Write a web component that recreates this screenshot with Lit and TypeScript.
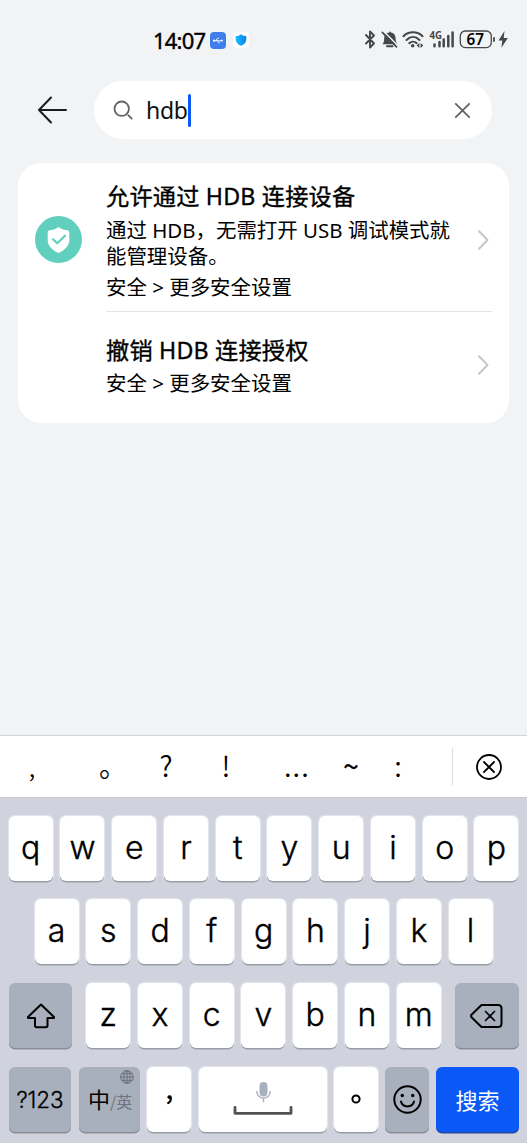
import { LitElement, html, css } from "lit";
import { customElement, property } from "lit/decorators.js";

@customElement("status-bar")
class StatusBar extends LitElement {
  static styles = css`
    :host { display: flex; height: 40px; padding: 20px 18px 0 153px; align-items: center; justify-content: space-between; box-sizing: content-box; }
    .side { display: flex; align-items: center; height: 40px; }
    .time { font: 400 22px/38px "Noto Sans", sans-serif; width: 57px; letter-spacing: -0.8px; color: #000; white-space: nowrap; -webkit-text-stroke: 0.400px #000; }
    svg { display: block; overflow: visible; }
    .usb { margin-right: 7px; }
    .mono { font: 700 10.5px "Noto Sans", sans-serif; fill: #464749; }
    .level { font: 600 16px "Noto Sans", sans-serif; fill: #000; }
  `;
  render() {
    return html`
      <div class="side">
        <span class="time">14:07</span>
        <svg class="usb" width="16" height="17" viewBox="0 0 16 17">
          <rect width="16" height="17" rx="4" fill="#3f7fec" />
          <g stroke="#fff" stroke-width="0.9" fill="none"><path d="M3.5 8.7H12M5.5 8.7L7.5 6.3H9M7 8.7L8.7 10.7H10" /></g>
          <circle cx="4" cy="8.7" r="1.1" fill="#fff" /><path d="M11.3 7.3L13.3 8.7L11.3 10Z" fill="#fff" />
        </svg>
        <svg width="16" height="16" viewBox="0 0 16 16">
          <defs><linearGradient id="sh"><stop offset="0" stop-color="#16c0fb" /><stop offset="1" stop-color="#0a80ee" /></linearGradient></defs>
          <rect width="16" height="16" rx="4" fill="#fff" />
          <path d="M8 2.2C9.5 3.5 11.3 4 13.3 4V7.5C13.3 10.5 11 12.6 8 13.8C5 12.6 2.7 10.5 2.7 7.5V4C4.700 4 6.500 3.500 8 2.200Z" fill="url(#sh)" />
        </svg>
      </div>
      <svg width="145" height="40" viewBox="364 20 145 40" fill="none" stroke="#464749">
        <path d="M366 35L374 43.500L370 47.500V31.500L374 35.500L366 43.500" stroke-width="1.900" stroke-linejoin="round" stroke-linecap="round" />
        <path d="M382.500 44.300C384.500 42 384 40 384.200 37.500C384.600 34.300 386.500 32.900 389.200 32.600C389.200 31 390.800 31 390.800 32.600C393.500 32.900 395.400 34.800 395.600 38C395.600 40.500 396 42.300 397.500 44.300Z" fill="#464749" stroke="none" />
        <path d="M387 46.300H392.500" stroke-width="2" stroke-linecap="round" />
        <path d="M383.500 31.200L398 45.700" stroke="#f1f3f5" stroke-width="1.600" />
        <path d="M382.300 32.400L396.500 46.800" stroke-width="1.700" stroke-linecap="round" />
        <g stroke-width="2.100" stroke-linecap="round">
          <path d="M403.500 36.200C408.500 31 417.500 31 422.500 36.200M406.500 39.900C410.500 36 415.500 36 419.500 39.900M409.400 43.100C411.500 41.200 414.500 41.200 416.600 43.100" />
        </g>
        <circle cx="412.700" cy="45.700" r="1.800" fill="#464749" stroke="none" />
        <path d="M416.700 45.400L419.400 42.900V47.900ZM423.300 45.400L420.600 42.900V47.900Z" fill="#464749" stroke="none" />
        <text class="mono" x="429.500" y="38.800" textLength="12.500" lengthAdjust="spacingAndGlyphs" stroke="none">4G</text>
        <path d="M434.500 44.500V46.300M439.500 42V46.300M443.700 39.500V46.300M448.300 36V46.300M452.600 32.500V46.300" stroke-width="2.500" stroke-linecap="round" />
        <rect x="460.300" y="31" width="31" height="16.600" rx="5" stroke-width="1.300" />
        <text class="level" x="466.500" y="45.200" textLength="17.500" lengthAdjust="spacingAndGlyphs" stroke="none">67</text>
        <path d="M494 37.800V41" stroke-width="1.800" stroke-linecap="round" />
        <path d="M504.500 31L498.500 40.500H502.300L501.400 47.800L507.800 38H503.700Z" fill="#464749" stroke="none" />
      </svg>
    `;
  }
}

@customElement("search-header")
class SearchHeader extends LitElement {
  static styles = css`
    :host { display: flex; align-items: center; padding: 21px 35px 0 37px; }
    svg { display: block; flex: none; }
    .field { display: flex; flex: 1; align-items: center; height: 58px; margin-left: 27px; padding: 0 20px 0 19px; border-radius: 29px; background: #fff; }
    .query { flex: 1; display: flex; align-items: center; margin-left: 13px; font: 400 23px/32px "Noto Sans", sans-serif; color: #111; }
    .text { letter-spacing: -0.3px; }
    .caret { width: 3px; height: 33px; border-radius: 1.500px; background: #0a59f7; }
  `;
  render() {
    return html`
      <svg width="30" height="28" viewBox="0 0 30 28" fill="none" stroke="#1b1c1e" stroke-width="2" stroke-linecap="round" stroke-linejoin="round">
        <path d="M2 14H29M14 1.500L2 14L14 26.500" />
      </svg>
      <div class="field">
        <svg width="20" height="20" viewBox="0 0 20 20" fill="none" stroke="#636466" stroke-width="1.800" stroke-linecap="round">
          <circle cx="8.700" cy="8.700" r="7.200" /><path d="M15.200 15.200L18.700 18.700" />
        </svg>
        <div class="query"><span class="text">hdb</span><span class="caret"></span></div>
        <svg width="19" height="19" viewBox="0 0 19 19" fill="none" stroke="#636466" stroke-width="1.800" stroke-linecap="round"><path d="M2.800 2.800L16.200 16.200M16.200 2.800L2.800 16.200" /></svg>
      </div>
    `;
  }
}

@customElement("result-list")
class ResultList extends LitElement {
  static styles = css`
    :host { display: block; margin: 24px 18px 0 17.500px; height: 260px; border-radius: 23px; background: #fff; color: #000; font-family: "Noto Sans", "Noto Sans CJK SC", sans-serif; }
    .row { display: grid; grid-template-columns: 71px 1fr 14px; padding: 0 19px 0 17.500px; align-items: center; }
    .first { height: 149px; }
    .second { height: 111px; }
    .body { align-self: stretch; box-sizing: border-box; white-space: nowrap; }
    .first .body { padding-top: 17px; }
    .second .body { padding-top: 22px; }
    .title { font-size: 23.200px; line-height: 33px; height: 33px; letter-spacing: 0.200px; -webkit-text-stroke: 0.350px #000; }
    .desc { font-size: 20.450px; line-height: 26px; margin-top: 4px; height: 52px; }
    .path { font-size: 20.450px; line-height: 29px; margin-top: 4px; height: 29px; }
    .second .path { margin-top: 2px; }
    .line { height: 1px; margin: -1px 17.500px 0 88.500px; background: #e3e4e6; }
    .pad { padding-top: 4px; }
    .up { margin-top: -5px; }
    svg { display: block; }
  `;
  private chevron() {
    return html`<svg width="14" height="20" viewBox="0 0 14 20" fill="none" stroke="#c6c7c9" stroke-width="2" stroke-linecap="round" stroke-linejoin="round"><path d="M3 1.300L11.500 10L3 18.700" /></svg>`;
  }
  render() {
    return html`
      <div class="row first">
        <svg class="pad" width="47" height="47" viewBox="0 0 47 47">
          <circle cx="23.500" cy="23.500" r="23.500" fill="#61cfbe" />
          <path d="M23.500 11C26.500 13.300 30 14 32.500 14.300Q34.300 14.500 34.300 16.500V24C34.300 30 29.500 34.500 23.500 37C17.500 34.500 12.700 30 12.700 24V16.500Q12.700 14.500 14.500 14.300C17 14 20.500 13.300 23.500 11Z" fill="#fff" />
          <path d="M18 23.200L22.300 27.300L30 19.700" fill="none" stroke="#61cfbe" stroke-width="2.200" stroke-linecap="round" stroke-linejoin="round" />
        </svg>
        <div class="body">
          <div class="title">允许通过 HDB 连接设备</div>
          <div class="desc">通过 HDB，无需打开 USB 调试模式就<br />能管理设备。</div>
          <div class="path">安全 &gt; 更多安全设置</div>
        </div>
        <div class="pad">${this.chevron()}</div>
      </div>
      <div class="line"></div>
      <div class="row second">
        <span></span>
        <div class="body">
          <div class="title">撤销 HDB 连接授权</div>
          <div class="path">安全 &gt; 更多安全设置</div>
        </div>
        <div class="up">${this.chevron()}</div>
      </div>
    `;
  }
}

@customElement("symbol-bar")
class SymbolBar extends LitElement {
  static styles = css`
    :host { display: grid; box-sizing: border-box; grid-template-columns: 64px 98px 8px 112px 30px 78px 16px 46px 73px; height: 63px; border-top: 1px solid #d3d4d8; border-bottom: 1px solid #c8cad2; background: #fff; align-items: center; color: #000; }
    span { display: flex; justify-content: center; white-space: nowrap; font: 350 28px/40px "Noto Sans CJK SC", sans-serif; padding-bottom: 3px; }
    .small { font-size: 24px; padding-bottom: 0; }
    .dots { letter-spacing: 1.200px; }
    .wave { -webkit-text-stroke: 0.500px #000; }
    .close { display: flex; align-items: center; justify-content: center; height: 37px; border-left: 1px solid #dcdde0; }
    svg { display: block; }
  `;
  render() {
    return html`
      <span class="small">,</span><span>。</span><span>?</span><span>!</span><span class="dots">...</span><span class="wave">~</span><span>:</span><i></i>
      <div class="close">
        <svg width="26" height="26" viewBox="0 0 26 26" fill="none" stroke="#000" stroke-width="1.800" stroke-linecap="round"><circle cx="13" cy="13" r="12" /><path d="M8 8L18 18M18 8L8 18" /></svg>
      </div>
    `;
  }
}

@customElement("key-cap")
class KeyCap extends LitElement {
  @property({ reflect: true }) tone = "light";
  static styles = css`
    :host { display: flex; box-sizing: border-box; height: 65px; align-items: center; justify-content: center; border-radius: 6px; background: #fff; box-shadow: 0 1.500px 0 #9b9da6, 0 0 1px 0.500px #e4e6ee; color: #000; font: 300 32px/40px Inter, sans-serif; white-space: nowrap; min-width: 0; }
    :host([tone="dark"]) { background: #a8afbd; box-shadow: 0 1.500px 0 #888d99; }
    :host([tone="blue"]) { background: #0a59f7; box-shadow: 0 1.500px 0 #24479c; color: #fff; }
  `;
  render() {
    return html`<slot></slot>`;
  }
}

@customElement("app-root")
class AppRoot extends LitElement {
  static styles = css`
    :host { display: flex; flex-direction: column; width: 527px; height: 1143px; overflow: hidden; background: #f1f3f5; }
    .space { flex: 1; }
    .keyboard { display: flex; flex-direction: column; gap: 18.700px; height: 344.600px; box-sizing: border-box; padding: 17.300px 8.700px 0; background: #d0d3dd; }
    .row { display: grid; column-gap: 7.750px; }
    .r1 { grid-template-columns: repeat(10, 44px); }
    .r2 { grid-template-columns: repeat(9, 44px); padding-left: 25.900px; }
    .r3 { grid-template-columns: 69.800px repeat(7, 44px) 70.200px; }
    .shift { margin-right: 6px; }
    .del { margin-left: 6.500px; }
    .r4 { grid-template-columns: 63.300px 61.500px 44.800px 128.500px 44px 44px 83px; column-gap: 6.900px; }
    .lead { margin-right: 0.800px; }
    .letter { height: 41px; -webkit-text-stroke: 0.400px #000; }
    .num { font-size: 22.400px; letter-spacing: -0.1px; height: 38px; -webkit-text-stroke: 0.300px #000; }
    .lang { display: grid; position: relative; width: 60.700px; height: 65px; }
    .zh { font: 400 22px/63px "Noto Sans CJK SC", sans-serif; padding-left: 9px; }
    .zh small { font-size: 16px; color: #6d727d; }
    .globe { position: absolute; right: 6px; top: 3px; }
    .comma { font: 500 26px/30px "Noto Sans CJK SC", sans-serif; height: 53px; }
    .go { font: 400 22px/32px "Noto Sans CJK SC", sans-serif; height: 33px; }
    svg { display: block; }
    .ink { fill: none; stroke: #000; stroke-width: 2; stroke-linecap: round; stroke-linejoin: round; }
  `;
  private letters(keys: string) {
    return [...keys].map((k) => html`<key-cap><span class="letter">${k}</span></key-cap>`);
  }
  render() {
    return html`
      <status-bar></status-bar>
      <search-header></search-header>
      <result-list></result-list>
      <div class="space"></div>
      <symbol-bar></symbol-bar>
      <div class="keyboard">
        <div class="row r1">${this.letters("qwertyuiop")}</div>
        <div class="row r2">${this.letters("asdfghjkl")}</div>
        <div class="row r3">
          <key-cap class="shift" tone="dark">
            <svg class="ink" width="30" height="26" viewBox="0 0 30 26"><path d="M15 1.500L28 14V15H21.500V22.500Q21.500 24.200 19.800 24.200H10.700Q9 24.200 9 22.500V15H2V14Z" /></svg>
          </key-cap>
          ${this.letters("zxcvbnm")}
          <key-cap class="del" tone="dark">
            <svg class="ink" width="33" height="24" viewBox="0 0 33 24"><path d="M11.500 1H28Q31.500 1 31.500 4.500V19.500Q31.500 23 28 23H11.500L1.500 13.300Q.5 12 1.500 10.700Z" /><path d="M15.500 7.500L24.500 16.500M24.500 7.500L15.500 16.500" stroke-width="1.700" /></svg>
          </key-cap>
        </div>
        <div class="row r4">
          <key-cap class="lead" tone="dark"><span class="num">?123</span></key-cap>
          <key-cap class="lead" tone="dark">
            <div class="lang">
              <span class="zh">中<small>/英</small></span>
              <svg class="globe" width="14" height="14" viewBox="0 0 14 14" fill="none" stroke="#6a6f79" stroke-width="1"><circle cx="7" cy="7" r="6.300" /><ellipse cx="7" cy="7" rx="3.200" ry="6.300" /><path d="M7 .7V13.300M.7 7H13.300M1.800 3.700H12.200M1.800 10.300H12.200" /></svg>
            </div>
          </key-cap>
          <key-cap class="lead"><span class="comma">,</span></key-cap>
          <key-cap>
            <svg width="60" height="36" viewBox="0 0 60 36" fill="none">
              <rect x="26.500" y="1" width="8" height="14.500" rx="4" fill="#a8afbd" />
              <path d="M23.700 10C23.700 19.500 37.300 19.500 37.300 10M30.500 17V21.500" stroke="#a8afbd" stroke-width="1.400" />
              <path d="M2 26.500V32.300H58V26.500" stroke="#515254" stroke-width="2.800" stroke-linejoin="round" stroke-linecap="round" />
            </svg>
          </key-cap>
          <key-cap><svg width="10" height="10" viewBox="0 0 10 10"><circle class="ink" cx="5" cy="5" r="3.600" /></svg></key-cap>
          <key-cap tone="dark">
            <svg class="ink" width="29" height="29" viewBox="0 0 29 29"><circle cx="14.500" cy="14.500" r="13.200" /><path d="M8 16.500C9.500 23 19.500 23 21 16.500" /><g fill="#000" stroke="none"><circle cx="9.300" cy="10.500" r="1.700" /><circle cx="19.700" cy="10.500" r="1.700" /></g></svg>
          </key-cap>
          <key-cap tone="blue"><span class="go">搜索</span></key-cap>
        </div>
      </div>
    `;
  }
}
